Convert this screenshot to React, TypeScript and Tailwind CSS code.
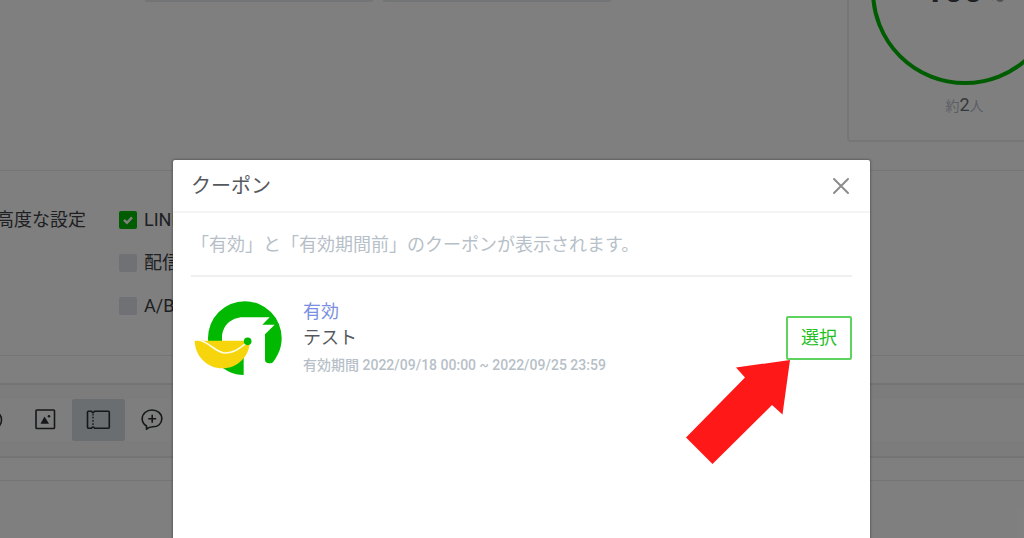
import clsx from 'clsx';

const options = [
  { id: 'voom', label: 'LINE', checked: true },
  { id: 'limit', label: '配信', checked: false },
  { id: 'abtest', label: 'A/B', checked: false },
];

function SmileIcon() {
  return (
    <svg width="22" height="22" viewBox="0 0 22 22" fill="none" stroke="currentColor" strokeWidth="1.6">
      <circle cx="10" cy="11" r="9.5" />
      <path d="M5.5 12.5c1 4 8 4 9 0M7 7v2M13 7v2" strokeLinecap="round" />
    </svg>
  );
}

function ImageIcon() {
  return (
    <svg width="22" height="22" viewBox="0 0 22 22" fill="none">
      <rect x="1" y="1" width="18.5" height="18.5" rx="0.8" stroke="currentColor" strokeWidth="1.6" />
      <path d="M5.5 14.7 9.5 7.5l4.5 7.2Z" fill="currentColor" />
      <circle cx="14" cy="7.2" r="1.3" fill="currentColor" />
    </svg>
  );
}

function CouponIcon() {
  return (
    <svg width="26" height="20" viewBox="0 0 26 20" fill="none" stroke="currentColor" strokeWidth="1.6">
      <path
        d="M2.4 1.2h3.2c.3 1.7 2.5 1.7 2.8 0h14c.5 0 .9.4.9.9v15.2c0 .5-.4.9-.9.9h-14c-.3-1.7-2.5-1.7-2.8 0H2.4c-.5 0-.9-.4-.9-.9V2.1c0-.5.4-.9.9-.9Z"
        strokeLinejoin="round"
      />
      <path d="M7 3.6v13" strokeWidth="1.3" strokeDasharray="1.8 1.4" />
    </svg>
  );
}

function ChatPlusIcon() {
  return (
    <svg width="22" height="22" viewBox="0 0 22 22" fill="none" stroke="currentColor" strokeWidth="1.6">
      <path
        d="M5.5 20.2V17C2.6 15.1 1.2 12.8 1.2 9.9 1.2 4.7 5.6 1 11 1s9.8 3.6 9.8 8.8-4 8-8.8 8c-2.7 0-4.4.4-6.5 2.4Z"
        strokeLinejoin="round"
      />
      <path d="M11.2 5.7v8M7.2 9.7h8" />
    </svg>
  );
}

const tools = [
  { name: '絵文字', icon: SmileIcon, active: false },
  { name: '画像', icon: ImageIcon, active: false },
  { name: 'クーポン', icon: CouponIcon, active: true },
  { name: 'メッセージ', icon: ChatPlusIcon, active: false },
];

function CouponLogo() {
  return (
    <svg width="90" height="76" viewBox="40 58 270 228" className="shrink-0" aria-hidden="true">
      <path
        d="M192 283C132 282 85 233 85 172A110.5 110.5 0 0 1 306 172C306 200 296 224 281 243C276 250 256 250 256 238V161L285 132H248L270 110H190C154 110 127 136 127 172V182L192 225Z"
        fill="#00b900"
      />
      <path d="M45 180H211C210 226 174 263 128 263S46 226 45 180Z" fill="#f6d50c" />
      <path d="M56 178C92 184 106 217 137 217C164 217 180 202 204 184" fill="none" stroke="#fffbe0" strokeWidth="5" />
      <circle cx="204" cy="182" r="11.5" fill="#00b900" />
    </svg>
  );
}

function BackgroundPage() {
  return (
    <div className="text-[#3c4146]">
      {/* 配信対象 */}
      <section className="-mt-[140px] flex justify-end border-b border-[#ebebeb] pb-7">
        <div className="mr-auto flex shrink-0 gap-2 pl-36">
          <div className="h-[142px] w-[230px] rounded border-2 border-[#e6e8ea]" />
          <div className="h-[142px] w-[230px] rounded border-2 border-[#e6e8ea]" />
        </div>
        <div className="-mr-[58px] flex w-[235px] shrink-0 flex-col items-center rounded border-2 border-[#ececec] px-6 pb-[22px] pt-[35px]">
          <div className="flex size-[188px] justify-center rounded-full border-4 border-[#00b900] pt-[68px] text-[34px] font-bold leading-[42px]">
            <p>
              100<span className="ml-1 text-2xl text-[#a0a6ad]">%</span>
            </p>
          </div>
          <p className="mt-2 text-sm leading-6 text-[#b7bfc8]">
            約<span className="text-lg leading-6 text-[#6b7076]">2</span>人
          </p>
        </div>
      </section>

      {/* 高度な設定 */}
      <section className="flex border-b border-[#ebebeb] pb-[37px] pt-[37px] text-lg leading-6">
        <h2 className="-ml-1 w-[123px] shrink-0">高度な設定</h2>
        <ul className="flex flex-col gap-[19px]">
          {options.map((option) => (
            <li key={option.id} className="flex items-center">
              <span className="relative flex">
                <input
                  id={option.id}
                  type="checkbox"
                  defaultChecked={option.checked}
                  className="size-[18px] appearance-none rounded-xs bg-[#dfe3e8] checked:bg-[#00b900]"
                />
                {option.checked && (
                  <svg className="pointer-events-none absolute inset-0" width="18" height="18" viewBox="0 0 18 18" fill="none">
                    <path d="m5 8.8 3 3 5-5.4" stroke="#fff" strokeWidth="2.4" />
                  </svg>
                )}
              </span>
              <label htmlFor={option.id} className="ml-[7px]">
                {option.label}
              </label>
            </li>
          ))}
        </ul>
      </section>

      {/* ツールバー */}
      <div className="mt-[27px] border-y-2 border-[#e8e8e8] bg-[#f9f9f9] pb-[15px] pt-[14px]">
        <div className="-ml-[34px] flex bg-[#fdfdfd]">
          {tools.map(({ name, icon: Icon, active }) => (
            <button
              key={name}
              type="button"
              aria-label={name}
              className={clsx(
                'flex h-[42px] w-[53px] items-center justify-center rounded-xs text-[#2a2e33]',
                active && 'bg-[#d4dce2]',
              )}
            >
              <Icon />
            </button>
          ))}
        </div>
      </div>
      <div className="mt-[22px] border-t border-[#ebebeb]" />
    </div>
  );
}

function CouponDialog() {
  return (
    <div
      role="dialog"
      aria-labelledby="dialog-title"
      className="min-h-[480px] w-full max-w-[697px] rounded-xs bg-white shadow-[0_0_2px_1px_rgba(0,0,0,0.25)]"
    >
      <header className="flex items-center justify-between border-b-2 border-[#f5f5f5] pb-3 pl-[18px] pr-5 pt-[13px]">
        <h1 id="dialog-title" className="text-xl leading-[26px] text-[#55595e]">
          クーポン
        </h1>
        <button type="button" aria-label="閉じる" className="text-[#8c8c8c]">
          <svg width="18" height="18" viewBox="0 0 18 18" fill="none" stroke="currentColor" strokeWidth="2">
            <path d="m2 2 14 14M16 2 2 16" strokeLinecap="round" />
          </svg>
        </button>
      </header>

      <div className="px-[18px]">
        <p className="border-b-2 border-[#efefef] pb-[18px] pt-5 text-lg leading-6 text-[#b7bfc8]">
          「有効」と「有効期間前」のクーポンが表示されます。
        </p>
        <div className="flex items-center pl-[2px] pt-5">
          <CouponLogo />
          <div className="ml-5 min-w-0 flex-1 pt-[2px]">
            <p className="text-lg leading-[26px] text-[#7a8fe0]">有効</p>
            <p className="text-lg leading-[26px] text-[#55595e]">テスト</p>
            <p className="text-sm font-medium leading-7 text-[#b7bfc8]">有効期間 2022/09/18 00:00 ~ 2022/09/25 23:59</p>
          </div>
          <div className="relative">
            <button
              type="button"
              className="flex h-11 w-[66px] items-center justify-center rounded-xs border-2 border-[#5fd35f] text-lg text-[#1fbf1f]"
            >
              選択
            </button>
            <svg className="absolute right-[62px] top-full" width="104" height="104" viewBox="0 0 104 104">
              <path d="M104 0 50 7.5 59 17.5 0 77.5 26.5 104 86 45 96.5 54.5Z" fill="#ff1818" />
            </svg>
          </div>
        </div>
      </div>
    </div>
  );
}

export default function App() {
  return (
    <div className="relative h-screen overflow-hidden bg-white font-['Roboto','Noto_Sans_CJK_JP',sans-serif]">
      <BackgroundPage />
      {/* オーバーレイ */}
      <div className="absolute inset-0 flex items-start justify-center overflow-hidden bg-black/50 pl-[19px] pt-40">
        <CouponDialog />
      </div>
    </div>
  );
}
